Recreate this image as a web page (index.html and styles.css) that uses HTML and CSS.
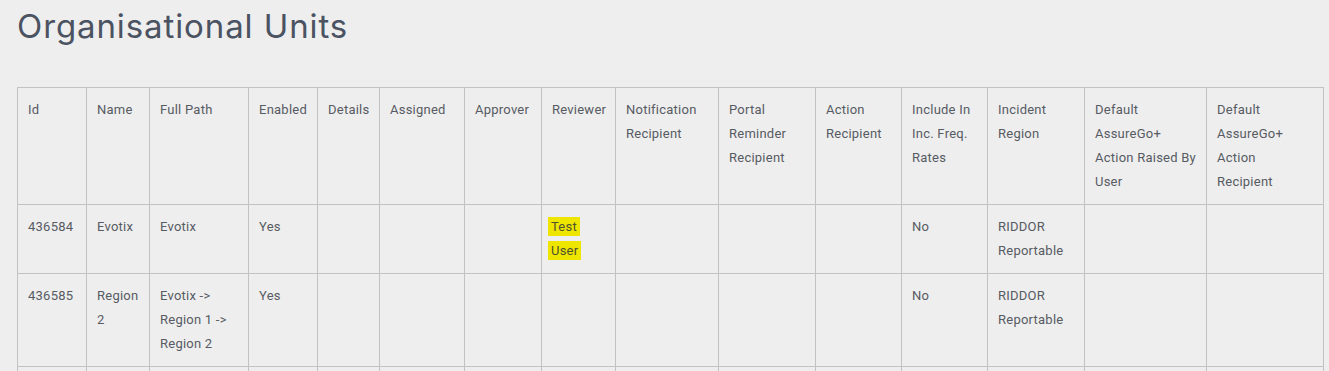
FILE: index.html
```html
<!DOCTYPE html>
<html lang="en">
<head>
<meta charset="utf-8">
<title>Organisational Units</title>
<link rel="stylesheet" href="styles.css">
</head>
<body>
<main class="page">
  <h1 class="title">Organisational Units</h1>
  <table class="units">
    <colgroup>
      <col class="c-id"><col class="c-name"><col class="c-path"><col class="c-enabled"><col class="c-details">
      <col class="c-assigned"><col class="c-approver"><col class="c-reviewer"><col class="c-notif"><col class="c-portal">
      <col class="c-action"><col class="c-include"><col class="c-region"><col class="c-raised"><col class="c-recipient">
    </colgroup>
    <thead>
      <tr>
        <th>Id</th>
        <th>Name</th>
        <th>Full Path</th>
        <th>Enabled</th>
        <th>Details</th>
        <th>Assigned</th>
        <th>Approver</th>
        <th>Reviewer</th>
        <th>Notification Recipient</th>
        <th>Portal Reminder Recipient</th>
        <th>Action Recipient</th>
        <th>Include In Inc. Freq. Rates</th>
        <th>Incident Region</th>
        <th>Default AssureGo+ Action Raised By User</th>
        <th>Default AssureGo+ Action Recipient</th>
      </tr>
    </thead>
    <tbody>
      <tr>
        <td>436584</td>
        <td>Evotix</td>
        <td>Evotix</td>
        <td>Yes</td>
        <td></td>
        <td></td>
        <td></td>
        <td><span class="hl">Test User</span></td>
        <td></td>
        <td></td>
        <td></td>
        <td>No</td>
        <td>RIDDOR Reportable</td>
        <td></td>
        <td></td>
      </tr>
      <tr>
        <td>436585</td>
        <td>Region 2</td>
        <td>Evotix -&gt; Region 1 -&gt; Region 2</td>
        <td>Yes</td>
        <td></td>
        <td></td>
        <td></td>
        <td></td>
        <td></td>
        <td></td>
        <td></td>
        <td>No</td>
        <td>RIDDOR Reportable</td>
        <td></td>
        <td></td>
      </tr>
      <tr>
        <td>&nbsp;</td><td></td><td></td><td></td><td></td><td></td><td></td><td></td>
        <td></td><td></td><td></td><td></td><td></td><td></td><td></td>
      </tr>
    </tbody>
  </table>
</main>
</body>
</html>
```

FILE: styles.css
```css
html, body {
  margin: 0;
  padding: 0;
  background: #eeeeee;
}

body {
  font-family: Roboto, "Liberation Sans", sans-serif;
  color: #575b63;
}

.page {
  padding: 0 5px 0 17px;
}

.title {
  margin: 0;
  padding-top: 6px;
  height: 87px;
  box-sizing: border-box;
  font-family: Inter, "Noto Sans", sans-serif;
  font-size: 33px;
  font-weight: 400;
  line-height: 40px;
  color: #4b5261;
  letter-spacing: 0.9px;
}

.units {
  border-collapse: collapse;
  table-layout: fixed;
  width: 1307px;
  font-size: 13px;
  line-height: 24px;
  letter-spacing: 0.24px;
}

.units th,
.units td {
  border: 1px solid #c2c2c2;
  padding: 10px 10px;
  text-align: left;
  vertical-align: top;
  font-weight: 400;
}

.c-id { width: 69px; }
.c-name { width: 63px; }
.c-path { width: 99px; }
.c-enabled { width: 69px; }
.c-details { width: 62px; }
.c-assigned { width: 85px; }
.c-approver { width: 77px; }
.c-reviewer { width: 74px; }
.c-notif { width: 103px; }
.c-portal { width: 97px; }
.c-action { width: 86px; }
.c-include { width: 86px; }
.c-region { width: 97px; }
.c-raised { width: 122px; }
.c-recipient { width: 117px; }

.hl {
  background: #efe600;
  color: #4e5030;
  padding: 2px 3px;
  margin-left: -4px;
  -webkit-box-decoration-break: clone;
  box-decoration-break: clone;
}
```
